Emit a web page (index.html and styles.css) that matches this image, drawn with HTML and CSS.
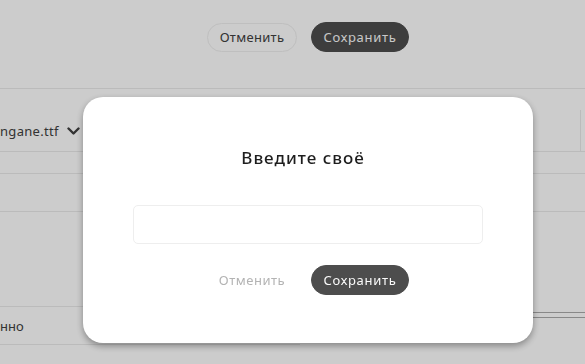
FILE: index.html
```html
<!DOCTYPE html>
<html lang="ru">
<head>
<meta charset="utf-8">
<title>Шрифт</title>
<link rel="stylesheet" href="styles.css">
</head>
<body>
<div class="page">
  <header class="toolbar">
    <div class="actions">
      <button class="btn btn-ghost">Отменить</button>
      <button class="btn btn-primary">Сохранить</button>
    </div>
  </header>
  <section class="row row-file">
    <div class="file">ngane.ttf
      <svg class="chev" width="13" height="9" viewBox="0 0 13 9"><path d="M1.5 1.5 L6.5 6.5 L11.5 1.5" fill="none" stroke="#404040" stroke-width="2.4" stroke-linecap="round" stroke-linejoin="round"/></svg>
    </div>
    <div class="cell-right"></div>
  </section>
  <div class="row row-thin"></div>
  <div class="row row-mid"></div>
  <div class="row-split">
    <div class="col-left">
      <div class="spacer"></div>
      <div class="item">нно</div>
    </div>
    <div class="col-right"><div class="double"></div></div>
  </div>
</div>
<div class="overlay"></div>
<div class="modal">
  <h2 class="modal-title">Введите своё</h2>
  <input class="modal-input" type="text">
  <div class="actions">
    <button class="btn btn-plain">Отменить</button>
    <button class="btn btn-primary">Сохранить</button>
  </div>
</div>
</body>
</html>
```
FILE: styles.css
```css
* { box-sizing: border-box; }
html, body { margin: 0; padding: 0; }
body {
  width: 585px;
  height: 364px;
  overflow: hidden;
  background: #fff;
  font-family: "Noto Sans", "DejaVu Sans", sans-serif;
  color: #404040;
}
.page { width: 585px; }
.toolbar {
  height: 89px;
  padding: 22px 0 0 31px;
  border-bottom: 1px solid #eaeaea;
  display: flex;
  justify-content: center;
  align-items: flex-start;
}
.actions { display: flex; gap: 14px; align-items: center; }
.btn {
  font-family: inherit;
  font-size: 13px;
  letter-spacing: 0.3px;
  height: 29px;
  border-radius: 15px;
  border: 1px solid transparent;
  background: transparent;
  padding: 0;
  line-height: 27px;
  text-align: center;
  cursor: pointer;
}
.btn-ghost { border-color: #efefef; color: #404040; width: 90px; }
.btn-primary { background: #4d4d4d; border-color: #4d4d4d; color: #fafafa; width: 98px; height: 30px; letter-spacing: 0.7px; }
.btn-plain { color: #b3b3b3; width: 90px; letter-spacing: 0.5px; }

.row { border-bottom: 1px solid #eaeaea; display: flex; }
.row-file { height: 63px; align-items: flex-end; padding-bottom: 11px; }
.file { font-size: 13px; letter-spacing: 0.3px; line-height: 18px; display: flex; align-items: center; gap: 8px; }
.chev { margin-top: 1px; }
.cell-right { margin-left: auto; align-self: stretch; width: 5px; margin-top: 21px; margin-bottom: -11px; border-left: 1px solid #eaeaea; }
.row-thin { height: 22px; }
.row-mid { height: 38px; }
.row-split { display: flex; }
.col-left { width: 300px; }
.spacer { height: 95px; border-bottom: 1px solid #eaeaea; }
.item { height: 38px; border-bottom: 1px solid #eaeaea; font-size: 13px; display: flex; align-items: center; }
.col-right { flex: 1; padding-top: 100px; }
.double { height: 6px; border-top: 1px solid #aaa; border-bottom: 1px solid #aaa; }

.overlay { position: fixed; inset: 0; background: rgba(0,0,0,0.2); }
.modal {
  position: fixed;
  left: 83px;
  top: 97px;
  width: 450px;
  height: 246px;
  background: #fff;
  border-radius: 20px;
  box-shadow: 0 3px 7px rgba(0,0,0,0.35);
  display: flex;
  flex-direction: column;
  align-items: center;
  padding-top: 51px;
}
.modal-title { margin: 0 10px 0 0; font-size: 17px; line-height: 20px; font-weight: 500; letter-spacing: 1px; color: #1e1e1e; }
.modal-input {
  margin-top: 37px;
  width: 350px;
  height: 39px;
  border: 1px solid #eeeeee;
  border-radius: 5px;
  outline: none;
}
.modal .actions { margin-top: 21px; }
```
